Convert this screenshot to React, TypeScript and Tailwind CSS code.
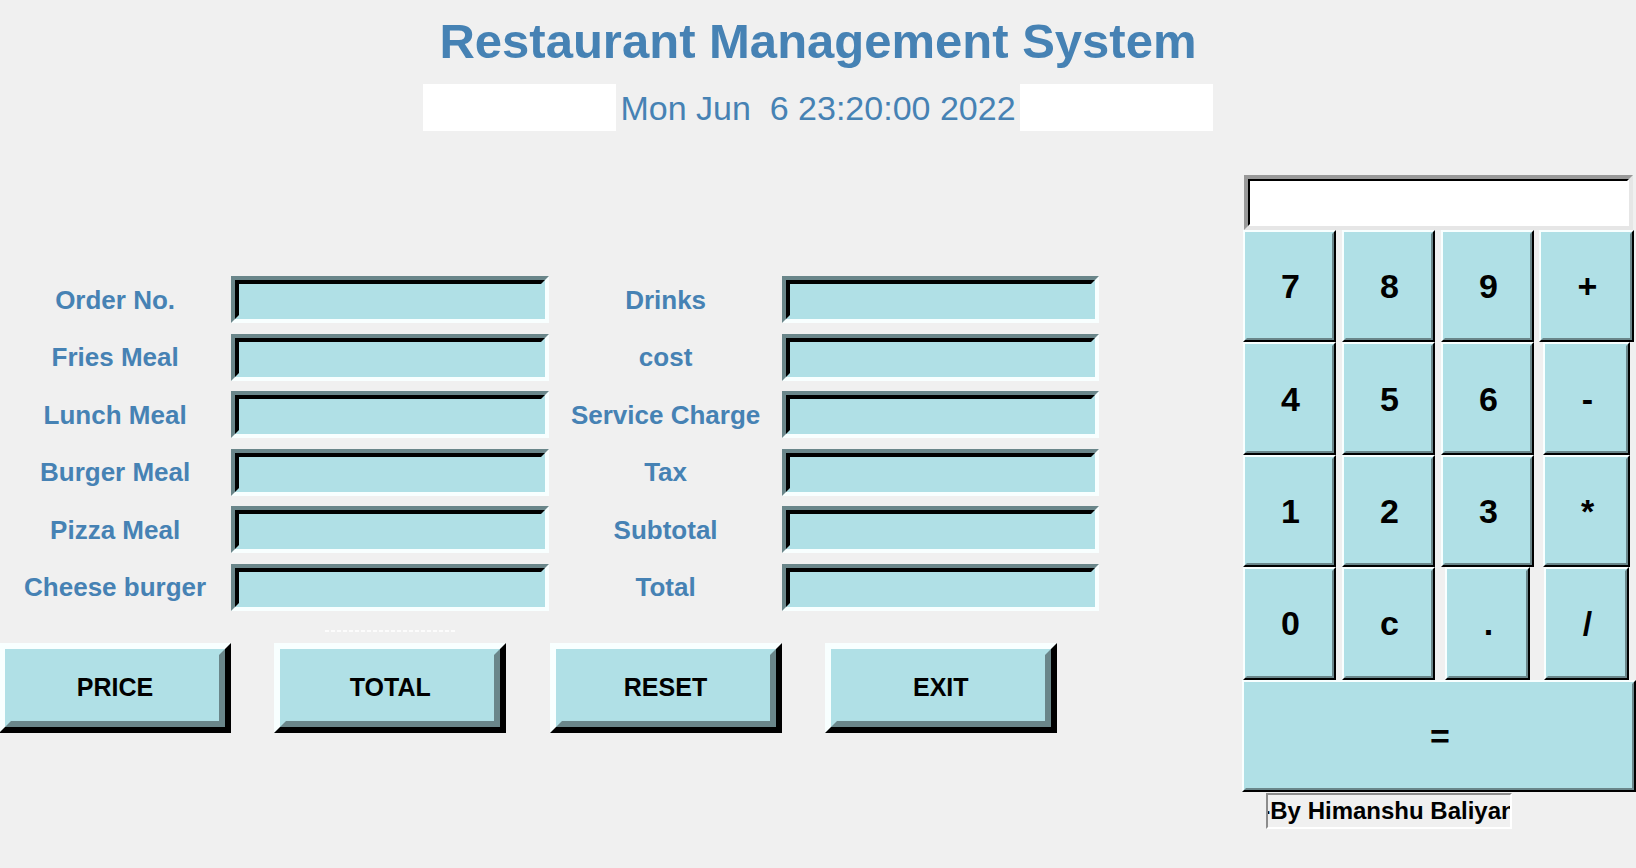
import { Fragment } from "react";

const fieldRows: [string, string][] = [
  ["Order No.", "Drinks"],
  ["Fries Meal", "cost"],
  ["Lunch Meal", "Service Charge"],
  ["Burger Meal", "Tax"],
  ["Pizza Meal", "Subtotal"],
  ["Cheese burger", "Total"],
];

const actions = ["PRICE", "TOTAL", "RESET", "EXIT"];

const keys: { label: string; width: string }[] = [
  { label: "7", width: "w-[93px]" },
  { label: "8", width: "w-[93px]" },
  { label: "9", width: "w-[93px]" },
  { label: "+", width: "w-[95px]" },
  { label: "4", width: "w-[93px]" },
  { label: "5", width: "w-[93px]" },
  { label: "6", width: "w-[93px]" },
  { label: "-", width: "w-[87px]" },
  { label: "1", width: "w-[93px]" },
  { label: "2", width: "w-[93px]" },
  { label: "3", width: "w-[93px]" },
  { label: "*", width: "w-[87px]" },
  { label: "0", width: "w-[93px]" },
  { label: "c", width: "w-[93px]" },
  { label: ".", width: "w-[85px]" },
  { label: "/", width: "w-[85px]" },
];

function Field({ label }: { label: string }) {
  const id = label.toLowerCase().replace(/[^a-z]+/g, "-");
  return (
    <>
      <label htmlFor={id} className="self-center text-center text-[26px] leading-8 font-bold whitespace-nowrap text-[#4682b4]">
        {label}
      </label>
      <div className="mr-px flex h-[47px] border-4 border-t-[#6a868a] border-r-[#f8ffff] border-b-[#f8ffff] border-l-[#6a868a]">
        <input
          id={id}
          type="text"
          className="w-full min-w-0 border-4 border-t-black border-r-[#b0e0e6] border-b-[#b0e0e6] border-l-black bg-[#b0e0e6] px-1 text-2xl text-black outline-none"
        />
      </div>
    </>
  );
}

function ActionButton({ label }: { label: string }) {
  return (
    <button
      type="button"
      className="flex h-[90px] w-[232px] border-6 border-t-[#f8ffff] border-r-black border-b-black border-l-[#f8ffff] bg-[#b0e0e6]"
    >
      <span className="flex h-full w-full items-center justify-center border-6 border-t-[#b0e0e6] border-r-[#6a868a] border-b-[#6a868a] border-l-[#b0e0e6] pb-0.5 text-[25px] leading-8 font-bold text-black">
        {label}
      </span>
    </button>
  );
}

function Key({ label, width }: { label: string; width: string }) {
  return (
    <button
      type="button"
      className={`${width} flex border-2 border-t-[#f8ffff] border-r-black border-b-black border-l-[#f8ffff] bg-[#b0e0e6]`}
    >
      <span className="flex h-full w-full items-center justify-center border-2 border-t-[#b0e0e6] border-r-[#6a868a] border-b-[#6a868a] border-l-[#b0e0e6] pl-0.5 text-[34px] leading-10 font-bold text-black">
        {label}
      </span>
    </button>
  );
}

export default function App() {
  return (
    <main className="min-h-screen overflow-hidden bg-[#f0f0f0] font-['Liberation_Sans',Arial,sans-serif]">
      <header className="flex flex-col items-center text-[#4682b4]">
        <h1 className="pt-[7px] text-[49px] leading-[68px] font-bold">Restaurant Management System</h1>
        <div className="mt-[9px] flex h-[47px]">
          <div className="w-[193px] bg-white" />
          <time className="px-1 text-[34px] leading-12 whitespace-pre">Mon Jun  6 23:20:00 2022</time>
          <div className="w-[193px] bg-white" />
        </div>
      </header>

      <div className="mt-11 grid grid-cols-[275fr_35fr_99fr]">
        <form className="-ml-px pt-[101px]" onSubmit={(e) => e.preventDefault()}>
          <div className="grid h-[335px] grid-cols-[232fr_318fr_232fr_318fr] content-between">
            {fieldRows.map(([left, right]) => (
              <Fragment key={left}>
                <Field label={left} />
                <Field label={right} />
              </Fragment>
            ))}
          </div>
          <div className="mt-[19px] ml-[326px] h-0.5 w-[130px] bg-[repeating-linear-gradient(90deg,#fcfcfc_0_4px,transparent_4px_6px)]" />
          <div className="mt-[11px] grid grid-cols-4">
            {actions.map((label) => (
              <ActionButton key={label} label={label} />
            ))}
          </div>
        </form>

        <section aria-label="Calculator" className="col-start-3">
          <div className="mr-[3px] ml-1 flex h-[55px] border-4 border-t-[#999999] border-r-[#e6e6e6] border-b-[#e6e6e6] border-l-[#999999]">
            <input
              type="text"
              aria-label="Calculator display"
              className="w-full min-w-0 border-2 border-t-black border-r-white border-b-white border-l-black bg-white px-1 text-right text-3xl text-black outline-none"
            />
          </div>
          <div className="grid h-[562px] grid-cols-4 grid-rows-5">
            {keys.map((key) => (
              <div key={key.label} className="flex justify-center">
                <Key label={key.label} width={key.width} />
              </div>
            ))}
            <div className="col-span-4 flex pl-0.5">
              <Key label="=" width="w-full" />
            </div>
          </div>
          <p className="mt-px ml-[26px] flex h-9 w-[246px] justify-center overflow-hidden border-2 border-t-[#8c8c8c] border-r-white border-b-white border-l-[#8c8c8c] text-2xl font-bold whitespace-nowrap text-black">
            -By Himanshu Baliyan
          </p>
        </section>
      </div>
    </main>
  );
}
